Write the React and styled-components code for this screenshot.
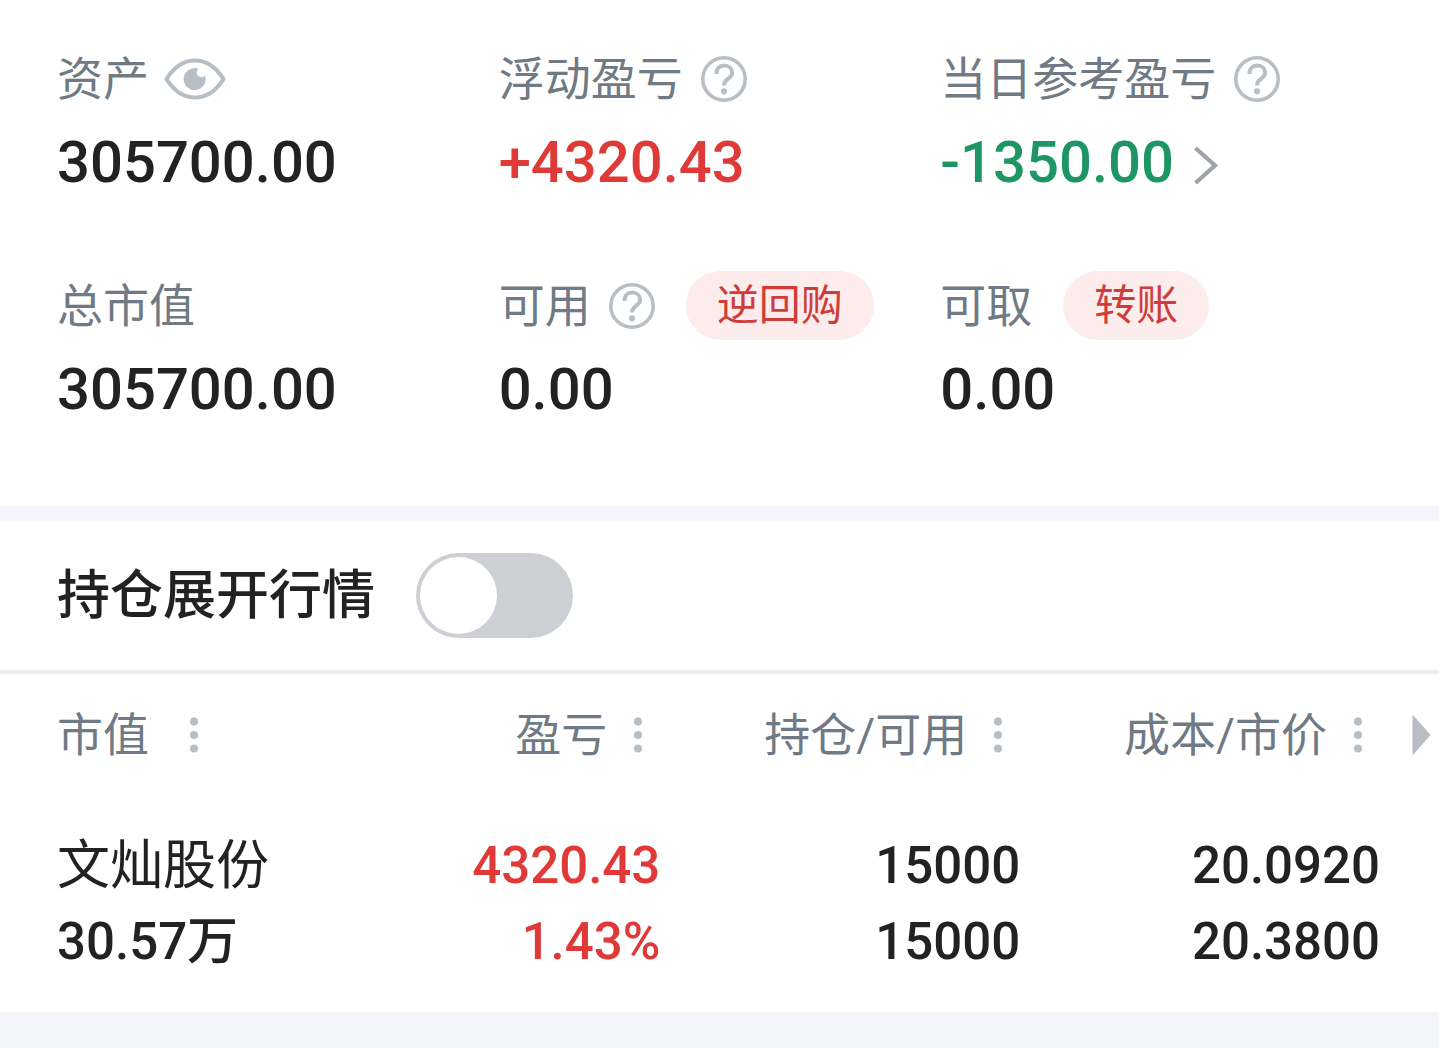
import React, { useState } from "react";
import styled, { createGlobalStyle } from "styled-components";

const color = {
  ink: "#222222",
  label: "#6f7a84",
  icon: "#b8bec5",
  chevron: "#9ca3ab",
  red: "#e03a38",
  pillText: "#cf3d3b",
  pillFill: "#fdecec",
  green: "#1e9664",
  band: "#f4f5fa",
  line: "#ecedef",
  track: "#cccfd4",
};

const GlobalStyle = createGlobalStyle`
  *, *::before, *::after { box-sizing: border-box; }
  html { background: ${color.band}; }
  body {
    margin: 0;
    color: ${color.ink};
    font-family: Roboto, "Noto Sans CJK SC", sans-serif;
  }
  button { border: 0; padding: 0; background: none; font: inherit; color: inherit; cursor: pointer; }
`;

const Page = styled.main`
  background: #fff;
`;

const Summary = styled.dl`
  display: grid;
  grid-template-columns: repeat(3, 1fr);
  row-gap: 73px;
  margin: 0;
  padding: 44px 57px 81px;
`;

const Metric = styled.div`
  display: flex;
  flex-direction: column;
  gap: 13px;
`;

const MetricLabel = styled.dt`
  display: flex;
  align-items: center;
  height: 69px;
  color: ${color.label};
  font-size: 46px;
  font-weight: 400;
  line-height: 66px;
  white-space: nowrap;
`;

const MetricValue = styled.dd`
  display: flex;
  align-items: center;
  gap: 19px;
  margin: 0;
  color: ${(p) => color[p.$tone || "ink"]};
  font-size: 58px;
  font-weight: 500;
  line-height: 72px;
`;

const IconButton = styled.button`
  display: flex;
  margin-left: ${(p) => p.$gap || 0}px;
  color: ${(p) => color[p.$tone || "icon"]};

  svg { display: block; }
`;

const Pill = styled.button`
  && {
    height: 69px;
    margin-left: 31px;
    padding: 0 31px;
    border-radius: 35px;
    background: ${color.pillFill};
    color: ${color.pillText};
    font-size: 42px;
    line-height: 68px;
  }
`;

const Band = styled.div`
  height: 15px;
  background: ${color.band};
`;

const SwitchRow = styled.label`
  display: flex;
  align-items: center;
  gap: 41px;
  height: 153px;
  padding: 0 57px;
  border-bottom: 4px solid ${color.line};
  font-size: 53px;
  font-weight: 500;
  line-height: 76px;
`;

const Switch = styled.input`
  appearance: none;
  width: 157px;
  height: 85px;
  margin: 0;
  padding: 4px;
  border-radius: 43px;
  background: ${color.track};

  &::before {
    content: "";
    display: block;
    width: 77px;
    height: 77px;
    border-radius: 50%;
    background: #fff;
  }

  &:checked { background: ${color.red}; }
  &:checked::before { margin-left: auto; }
`;

const Holdings = styled.section`
  position: relative;
  padding: 0 59px 32px 57px;
`;

const Table = styled.table`
  width: 100%;
  table-layout: fixed;
  border-collapse: collapse;
`;

const HeadCell = styled.th`
  width: ${(p) => (p.$first ? "auto" : "27.2%")};
  height: 122px;
  padding: 0;
  color: ${color.label};
  font-size: 46px;
  font-weight: 400;
  line-height: 66px;
  white-space: nowrap;
`;

const HeadContent = styled.div`
  display: flex;
  align-items: center;
  justify-content: ${(p) => (p.$first ? "flex-start" : "flex-end")};
  gap: ${(p) => (p.$first ? 23 : 9)}px;
`;

const SortButton = styled(IconButton)`
  justify-content: center;
  width: 44px;
`;

const Cell = styled.td`
  padding: 32px 0 0;
  color: ${(p) => color[p.$tone || "ink"]};
  font-size: 51px;
  font-weight: 500;
  line-height: 76px;
  text-align: ${(p) => (p.$first ? "left" : "right")};
`;

const Line = styled.div`
  height: 76px;
  white-space: nowrap;
`;

const StockName = styled(Line)`
  font-size: 53px;
  font-weight: 400;
`;

const ScrollButton = styled(IconButton)`
  position: absolute;
  top: 40px;
  right: 8px;
`;

const EyeIcon = () => (
  <svg width="62" height="42" viewBox="0 0 62 42" fill="none">
    <path
      d="M2.5 21C10 9 20 2.500 31 2.500S52 9 59.500 21C52 33 42 39.500 31 39.500S10 33 2.500 21Z"
      stroke="currentColor"
      strokeWidth="4.200"
      strokeLinejoin="round"
    />
    <path
      d="M34.500 10.800A11 11 0 1 0 41 17.500A4.700 4.700 0 1 1 34.500 10.800Z"
      fill="currentColor"
    />
  </svg>
);

const HelpIcon = () => (
  <svg width="46" height="46" viewBox="0 0 46 46" fill="none">
    <circle cx="23" cy="23" r="21.200" stroke="currentColor" strokeWidth="3.600" />
    <path
      d="M15.500 18C15.500 12.500 18.800 9.600 23.300 9.600S31.200 12.600 31.200 17C31.200 22.500 23 22.500 23 29.500"
      stroke="currentColor"
      strokeWidth="4"
    />
    <circle cx="23" cy="35.300" r="3.100" fill="currentColor" />
  </svg>
);

const ChevronIcon = () => (
  <svg width="26" height="46" viewBox="0 0 26 46" fill="none">
    <path d="M2.500 9L22 26.500L2.500 44" stroke="currentColor" strokeWidth="4.200" />
  </svg>
);

const DotsIcon = () => (
  <svg width="8" height="36" viewBox="0 0 8 36" fill="currentColor">
    <circle cx="4" cy="4.500" r="4" />
    <circle cx="4" cy="18" r="4" />
    <circle cx="4" cy="31.500" r="4" />
  </svg>
);

const TriangleIcon = () => (
  <svg width="19" height="42" viewBox="0 0 19 42" fill="currentColor">
    <path d="M0.500 0.500L18.500 21L0.500 41.500Z" />
  </svg>
);

const Help = ({ label }) => (
  <IconButton type="button" $gap={18} aria-label={label}>
    <HelpIcon />
  </IconButton>
);

const columns = ["市值", "盈亏", "持仓/可用", "成本/市价"];

export default function App() {
  const [expanded, setExpanded] = useState(false);

  return (
    <>
      <GlobalStyle />
      <Page>
        <Summary>
          <Metric>
            <MetricLabel>
              资产
              <IconButton type="button" $gap={15} aria-label="显示或隐藏资产">
                <EyeIcon />
              </IconButton>
            </MetricLabel>
            <MetricValue>305700.00</MetricValue>
          </Metric>
          <Metric>
            <MetricLabel>
              浮动盈亏
              <Help label="浮动盈亏说明" />
            </MetricLabel>
            <MetricValue $tone="red">+4320.43</MetricValue>
          </Metric>
          <Metric>
            <MetricLabel>
              当日参考盈亏
              <Help label="当日参考盈亏说明" />
            </MetricLabel>
            <MetricValue $tone="green">
              -1350.00
              <IconButton type="button" $tone="chevron" aria-label="查看当日盈亏">
                <ChevronIcon />
              </IconButton>
            </MetricValue>
          </Metric>
          <Metric>
            <MetricLabel>总市值</MetricLabel>
            <MetricValue>305700.00</MetricValue>
          </Metric>
          <Metric>
            <MetricLabel>
              可用
              <Help label="可用资金说明" />
              <Pill type="button">逆回购</Pill>
            </MetricLabel>
            <MetricValue>0.00</MetricValue>
          </Metric>
          <Metric>
            <MetricLabel>
              可取
              <Pill type="button">转账</Pill>
            </MetricLabel>
            <MetricValue>0.00</MetricValue>
          </Metric>
        </Summary>

        <Band />

        <SwitchRow>
          持仓展开行情
          <Switch
            type="checkbox"
            role="switch"
            checked={expanded}
            onChange={(e) => setExpanded(e.target.checked)}
          />
        </SwitchRow>

        <Holdings>
          <Table>
            <thead>
              <tr>
                {columns.map((name, i) => (
                  <HeadCell key={name} scope="col" $first={i === 0}>
                    <HeadContent $first={i === 0}>
                      {name}
                      <SortButton type="button" aria-label={`${name}排序`}>
                        <DotsIcon />
                      </SortButton>
                    </HeadContent>
                  </HeadCell>
                ))}
              </tr>
            </thead>
            <tbody>
              <tr>
                <Cell $first>
                  <StockName>文灿股份</StockName>
                  <Line>30.57万</Line>
                </Cell>
                <Cell $tone="red">
                  <Line>4320.43</Line>
                  <Line>1.43%</Line>
                </Cell>
                <Cell>
                  <Line>15000</Line>
                  <Line>15000</Line>
                </Cell>
                <Cell>
                  <Line>20.0920</Line>
                  <Line>20.3800</Line>
                </Cell>
              </tr>
            </tbody>
          </Table>
          <ScrollButton type="button" aria-label="查看更多列">
            <TriangleIcon />
          </ScrollButton>
        </Holdings>
      </Page>
    </>
  );
}
